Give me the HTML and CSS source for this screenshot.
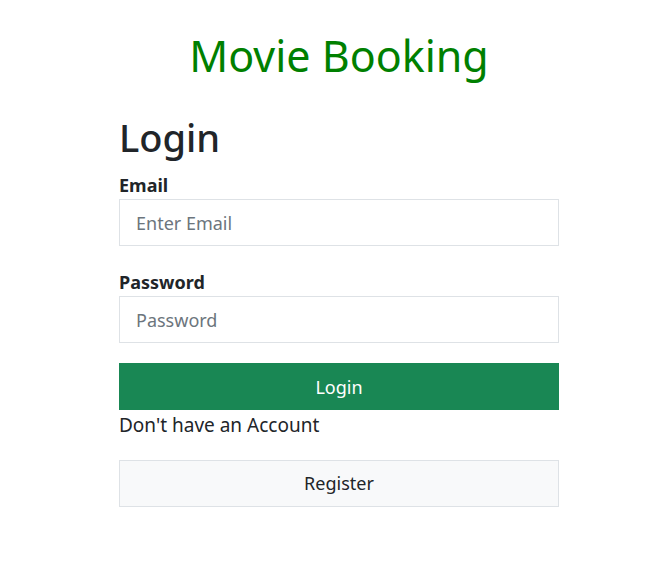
FILE: index.html
```html
<!DOCTYPE html>
<html lang="en">
<head>
<meta charset="utf-8">
<title>Movie Booking</title>
<link rel="stylesheet" href="styles.css">
</head>
<body>
<h1 class="title">Movie Booking</h1>
<main class="wrap">
  <h2 class="heading">Login</h2>
  <form class="form">
    <div class="field">
      <label class="label" for="email">Email</label>
      <input class="input" id="email" type="email" placeholder="Enter Email">
    </div>
    <div class="field">
      <label class="label" for="password">Password</label>
      <input class="input" id="password" type="password" placeholder="Password">
    </div>
    <button class="btn btn-primary" type="button">Login</button>
  </form>
  <p class="note">Don't have an Account</p>
  <button class="btn btn-light" type="button">Register</button>
</main>
</body>
</html>
```

FILE: styles.css
```css
* { box-sizing: border-box; }
body {
  margin: 0;
  padding: 30px 0 0 11px;
  font-family: "Noto Sans", "Open Sans", sans-serif;
  color: #212529;
  background: #fff;
}
.title {
  margin: 0;
  text-align: center;
  color: #008000;
  font-size: 43px;
  font-weight: 400;
  line-height: 1.2;
}
.wrap {
  width: 440px;
  margin: 33px auto 0;
}
.heading {
  margin: 0 0 12px;
  font-size: 38px;
  font-weight: 500;
  line-height: 1.2;
}
.form { display: flex; flex-direction: column; }
.field { display: flex; flex-direction: column; margin-bottom: 23px; }
.field:last-of-type { margin-bottom: 20px; }
.label {
  font-weight: 700;
  font-size: 18px;
  line-height: 27px;
}
.input {
  height: 47px;
  border: 1px solid #dee2e6;
  padding: 0 16px;
  font: inherit;
  font-size: 18px;
  color: #212529;
  outline: none;
}
.input::placeholder { color: #6c757d; }
.btn {
  display: block;
  width: 100%;
  height: 47px;
  padding: 0;
  font: inherit;
  font-size: 18px;
  border: 1px solid transparent;
  cursor: pointer;
}
.btn-primary { background: #198754; color: #fff; border-color: #198754; }
.btn-light { background: #f8f9fa; color: #212529; border-color: #dee2e6; }
.note {
  margin: 1px 0 20px;
  font-size: 19px;
  line-height: 28.5px;
}
```
